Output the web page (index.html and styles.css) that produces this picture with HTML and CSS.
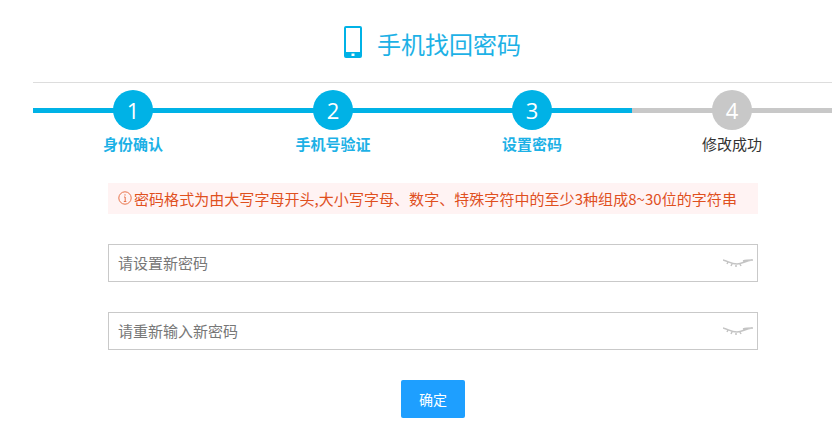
FILE: index.html
```html
<!DOCTYPE html>
<html lang="zh">
<head>
<meta charset="utf-8">
<title>手机找回密码</title>
<link rel="stylesheet" href="styles.css">
</head>
<body>
<div class="page">
  <header class="head">
    <svg class="phone" width="18" height="32" viewBox="0 0 18 32"><path fill-rule="evenodd" fill="#00b2e6" d="M2 0h14a2 2 0 0 1 2 2v28a2 2 0 0 1-2 2H2a2 2 0 0 1-2-2V2a2 2 0 0 1 2-2zM2 2v24h14V2zM7.500 27.500v2.500h3v-2.500z"/></svg>
    <h1 class="title">手机找回密码</h1>
  </header>
  <ol class="steps">
    <li class="step done"><span class="num">1</span><span class="label">身份确认</span></li>
    <li class="step done"><span class="num">2</span><span class="label">手机号验证</span></li>
    <li class="step done"><span class="num">3</span><span class="label">设置密码</span></li>
    <li class="step"><span class="num">4</span><span class="label">修改成功</span></li>
  </ol>
  <main class="form">
    <p class="alert"><svg class="info" width="14" height="14" viewBox="0 0 14 14"><circle cx="7" cy="7" r="6.200" fill="none" stroke="#e8734a" stroke-width="1"/><path d="M7 3.200v1.400M6 6h1.200v4.500M5.800 10.500h2.500" fill="none" stroke="#e8734a" stroke-width="1"/></svg>密码格式为由大写字母开头,大小写字母、数字、特殊字符中的至少3种组成8~30位的字符串</p>
    <div class="field">
      <input class="input" type="password" placeholder="请设置新密码">
      <svg class="eye" width="30" height="12" viewBox="0 0 30 12"><path d="M0 3c5 1 8 4 14 4 5 0 8-3 15-4M20 4c3-1 6-1 10-1M5 5l-1 2M9 7l-1 2M13 8v2M17 7l1 2" fill="none" stroke="#c4c4c4" stroke-width="1.500"/></svg>
    </div>
    <div class="field">
      <input class="input" type="password" placeholder="请重新输入新密码">
      <svg class="eye" width="30" height="12" viewBox="0 0 30 12"><path d="M0 3c5 1 8 4 14 4 5 0 8-3 15-4M20 4c3-1 6-1 10-1M5 5l-1 2M9 7l-1 2M13 8v2M17 7l1 2" fill="none" stroke="#c4c4c4" stroke-width="1.500"/></svg>
    </div>
    <button class="submit" type="button">确定</button>
  </main>
</div>
</body>
</html>
```
FILE: styles.css
```css
* { box-sizing: border-box; }
html, body { margin: 0; padding: 0; background: #fff; }
body {
  font-family: "Noto Sans CJK SC", "Open Sans", sans-serif;
  overflow: hidden;
  height: 424px;
}
.page { width: 799px; margin-left: 33px; }
.head {
  height: 83px;
  border-bottom: 1px solid #ddd;
  display: flex;
  align-items: flex-start;
  padding: 26px 0 0 311px;
}
.phone { flex: none; }
.title {
  margin: 2px 0 0 15px;
  font-size: 24px;
  font-weight: 400;
  line-height: 32px;
  color: #1db1e6;
}
.steps {
  list-style: none;
  margin: 7px 0 0;
  padding: 0;
  display: flex;
}
.step {
  width: 200px;
  height: 71px;
  display: flex;
  flex-direction: column;
  align-items: center;
  position: relative;
}
.step:nth-child(3) { width: 199px; padding-right: 1px; }
.step::before {
  content: "";
  position: absolute;
  left: 0;
  right: 0;
  top: 18px;
  height: 5px;
  background: #c8c8c8;
}
.step.done::before { background: #00b2e6; }
.num {
  position: relative;
  width: 40px;
  height: 40px;
  border-radius: 50%;
  background: #c8c8c8;
  color: #fff;
  font: 500 22px/40px "Open Sans", sans-serif;
  text-align: center;
}
.done .num { background: #00b2e6; }
.label {
  margin-top: 4px;
  font-size: 15px;
  line-height: 20px;
  color: #333;
}
.done .label { color: #1db1e6; font-weight: 700; }
.form {
  margin: 22px 0 0 75px;
  width: 650px;
  display: flex;
  flex-direction: column;
}
.alert {
  margin: 0 0 30px;
  height: 31px;
  background: #fff3f3;
  padding: 0 0 1px 10px;
  display: flex;
  align-items: center;
  font-size: 15px;
  letter-spacing: 0.05px;
  color: #e0501e;
  white-space: nowrap;
}
.info { flex: none; margin-right: 2px; }
.field {
  position: relative;
  height: 38px;
  margin-bottom: 30px;
}
.input {
  display: block;
  width: 100%;
  height: 100%;
  border: 1px solid #c9c9c9;
  background: #fff;
  padding: 0 9px 2px;
  font: 15px "Noto Sans CJK SC", sans-serif;
  outline: none;
}
.input::placeholder { color: #777; opacity: 1; }
.eye {
  position: absolute;
  right: 5px;
  top: 13px;
}
.submit {
  align-self: center;
  width: 64px;
  height: 38px;
  border: 0;
  border-radius: 2px;
  background: #1e9fff;
  color: #fff;
  font: 400 14px "Noto Sans CJK SC", sans-serif;
  padding: 0;
}
```
